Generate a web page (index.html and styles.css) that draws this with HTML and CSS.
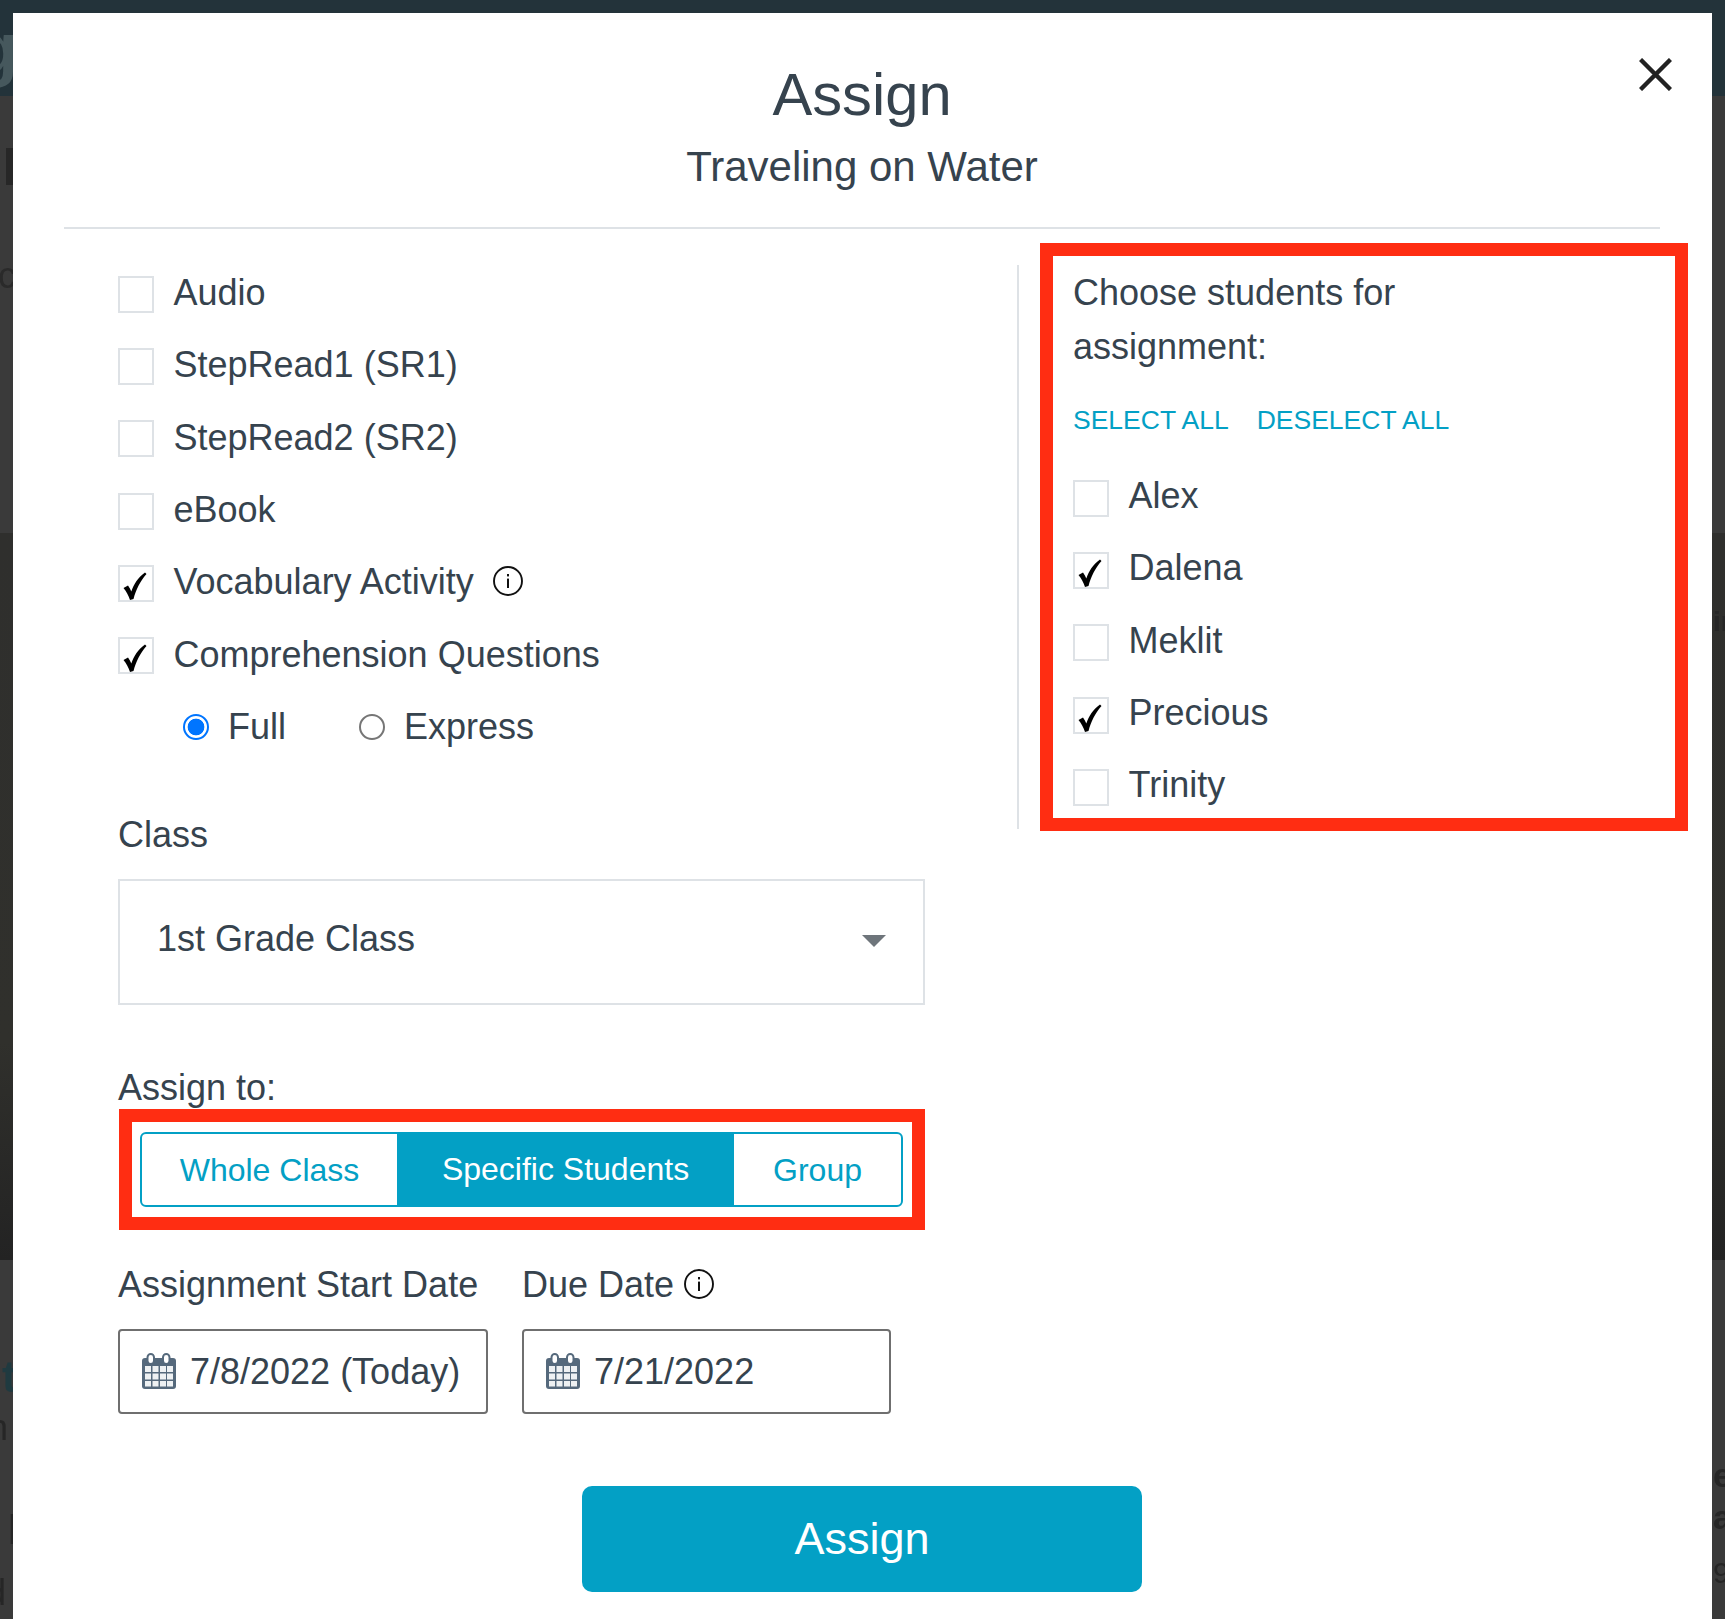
FILE: index.html
```html
<!DOCTYPE html>
<html lang="en">
<head>
<meta charset="utf-8">
<title>Assign</title>
<link rel="stylesheet" href="styles.css">
</head>
<body>
<div class="backdrop" aria-hidden="true">
  <div class="bd-top"></div>
  <div class="bd-band"></div>
  <div class="bd-bar"></div>
  <span class="frag frag-g">g</span>
  <span class="frag frag-c">c</span>
  <span class="frag frag-t">t</span>
  <span class="frag frag-n">n</span>
  <span class="frag frag-l">l</span>
  <span class="frag frag-d">d</span>
  <span class="frag frag-ir">ir</span>
  <span class="frag frag-e">e</span>
  <span class="frag frag-a">a</span>
  <span class="frag frag-9">9</span>
</div>
<svg class="defs" width="0" height="0" aria-hidden="true">
  <symbol id="check" viewBox="0 0 24 28">
    <path d="M0.500 16 L5 13.500 C6.500 15.500 7.500 17.500 8.300 19.500 C11 12 15 5.500 22 0.500 L23.500 2 C17 9.500 13 17.500 10.500 27 L7 28 C5.500 23.500 3.500 19.500 0.500 16 Z" fill="#000"/>
  </symbol>
  <symbol id="info" viewBox="0 0 30 30">
    <circle cx="15" cy="15" r="14" fill="none" stroke="#111" stroke-width="1.900"/>
    <rect x="14" y="8" width="2" height="2.400" fill="#111"/>
    <rect x="14" y="12.600" width="2" height="9.400" fill="#111"/>
  </symbol>
  <symbol id="cal" viewBox="0 0 34 36">
    <rect x="0" y="5" width="34" height="31" rx="3" fill="#55697c"/>
    <rect x="5.500" y="1" width="6.500" height="10" rx="3.250" fill="#fff" stroke="#55697c" stroke-width="2"/>
    <rect x="21" y="1" width="6.500" height="10" rx="3.250" fill="#fff" stroke="#55697c" stroke-width="2"/>
    <path d="M3 13h6v6H3zM10.500 13h6v6h-6zM18 13h6v6h-6zM25 13h6v6h-6zM3 20.500h6v6H3zM10.500 20.500h6v6h-6zM18 20.500h6v6h-6zM25 20.500h6v6h-6zM3 28h6v5.500H3zM10.500 28h6v5.500h-6zM18 28h6v5.500h-6zM25 28h6v5.500h-6z" fill="#eef1f3"/>
  </symbol>
</svg>
<main class="modal">
  <button class="close" type="button" aria-label="Close">
    <svg viewBox="0 0 33 33" width="33" height="33"><path d="M1.500 1.500L31.500 31.500M31.500 1.500L1.500 31.500" stroke="#222" stroke-width="4.400" fill="none"/></svg>
  </button>
  <header class="head">
    <h1 class="title">Assign</h1>
    <h2 class="subtitle">Traveling on Water</h2>
  </header>
  <div class="columns">
    <section class="left">
      <label class="check"><span class="box"></span>Audio</label>
      <label class="check"><span class="box"></span>StepRead1 (SR1)</label>
      <label class="check"><span class="box"></span>StepRead2 (SR2)</label>
      <label class="check"><span class="box"></span>eBook</label>
      <label class="check"><span class="box"><svg class="tick"><use href="#check"/></svg></span>Vocabulary Activity<svg class="info info-vocab"><use href="#info"/></svg></label>
      <label class="check"><span class="box"><svg class="tick"><use href="#check"/></svg></span>Comprehension Questions</label>
      <div class="radios">
        <label class="radio radio-full"><span class="dot dot-on"></span>Full</label>
        <label class="radio"><span class="dot"></span>Express</label>
      </div>
      <div class="field-label class-label">Class</div>
      <div class="select">1st Grade Class<span class="caret"></span></div>
      <div class="field-label assign-label">Assign to:</div>
      <div class="red-box seg-wrap">
        <div class="seg">
          <span class="seg-item seg-whole">Whole Class</span>
          <span class="seg-item seg-specific">Specific Students</span>
          <span class="seg-item seg-group">Group</span>
        </div>
      </div>
      <div class="dates">
        <div class="date-col">
          <div class="field-label date-label">Assignment Start Date</div>
          <div class="date-input"><svg class="cal"><use href="#cal"/></svg>7/8/2022 (Today)</div>
        </div>
        <div class="date-col">
          <div class="field-label date-label">Due Date<svg class="info info-due"><use href="#info"/></svg></div>
          <div class="date-input"><svg class="cal"><use href="#cal"/></svg>7/21/2022</div>
        </div>
      </div>
    </section>
    <div class="divider"></div>
    <section class="red-box students">
      <p class="students-title">Choose students for assignment:</p>
      <div class="links"><a class="link">SELECT ALL</a><a class="link">DESELECT ALL</a></div>
      <label class="check"><span class="box"></span>Alex</label>
      <label class="check"><span class="box"><svg class="tick"><use href="#check"/></svg></span>Dalena</label>
      <label class="check"><span class="box"></span>Meklit</label>
      <label class="check"><span class="box"><svg class="tick"><use href="#check"/></svg></span>Precious</label>
      <label class="check"><span class="box"></span>Trinity</label>
    </section>
  </div>
  <div class="actions"><button class="assign-btn" type="button">Assign</button></div>
</main>
</body>
</html>
```

FILE: styles.css
```css
* { box-sizing: border-box; }
html, body { margin: 0; height: 1619px; overflow: hidden; }
body {
  background: #3a3a3a;
  font-family: "Liberation Sans", Arial, sans-serif;
  color: #36434e;
  position: relative;
}
.defs { position: absolute; }

.backdrop { position: absolute; inset: 0; overflow: hidden; }
.bd-top { position: absolute; left: 0; right: 0; top: 0; height: 96px; background: #23333a; }
.bd-band {
  position: absolute;
  left: 0;
  right: 0;
  top: 533px;
  height: 727px;
  background: linear-gradient(#2f2f2d, #30302c 70%, #232323);
}
.bd-bar { position: absolute; left: 6px; top: 148px; width: 8px; height: 37px; background: #272727; }
.frag { position: absolute; color: #262626; font-weight: 700; filter: blur(.6px); line-height: 1; }
.frag-g { left: -26px; top: 12px; font-size: 72px; color: #46585d; }
.frag-c { left: -2px; top: 258px; font-size: 36px; font-weight: 400; color: #2a2a2a; }
.frag-t { left: 2px; top: 1355px; font-size: 44px; color: #1f3a40; }
.frag-n { left: -12px; top: 1410px; font-size: 36px; font-weight: 400; }
.frag-l { left: 8px; top: 1510px; font-size: 40px; font-weight: 400; }
.frag-d { left: -14px; top: 1575px; font-size: 36px; font-weight: 400; }
.frag-ir { left: 1713px; top: 608px; font-size: 28px; }
.frag-e { left: 1713px; top: 1458px; font-size: 34px; }
.frag-a { left: 1713px; top: 1500px; font-size: 34px; }
.frag-9 { left: 1713px; top: 1558px; font-size: 30px; font-weight: 400; }

.modal {
  position: absolute;
  left: 13px;
  top: 13px;
  width: 1699px;
  height: 1606px;
  background: #fff;
}
.close {
  position: absolute;
  left: 1626px;
  top: 45px;
  width: 33px;
  height: 33px;
  padding: 0;
  border: 0;
  background: none;
  line-height: 0;
}
.head {
  margin: 0 52px 0 51px;
  height: 216px;
  padding-top: 49px;
  border-bottom: 2px solid #dee2e6;
  text-align: center;
}
.title { margin: 0; font-size: 59.7px; line-height: 66px; font-weight: 400; }
.subtitle { margin: 15px 0 0; font-size: 42px; line-height: 48px; font-weight: 400; }

.columns { display: flex; align-items: flex-start; padding: 14px 0 0 105px; }
.left { width: 807px; padding-top: 14px; }
.divider { width: 2px; height: 564px; margin: 22px 0 0 92px; background: #dee2e6; }
.red-box { border: 13px solid #ff2d12; }

.check {
  display: flex;
  align-items: center;
  height: 72.3px;
  font-size: 36px;
  line-height: 44px;
  white-space: nowrap;
}
.box {
  flex: none;
  width: 36px;
  height: 37px;
  margin: 2px 19.5px 0 0;
  border: 2px solid #dee2e6;
  position: relative;
}
.students .box { margin-top: 4px; }
.tick { position: absolute; left: 3px; top: 5px; width: 24px; height: 28px; }
.info { width: 30px; height: 30px; flex: none; }
.info-vocab { margin-left: 19px; margin-top: -2px; }
.info-due { margin-left: 10px; margin-top: -2px; }

.radios { display: flex; align-items: center; height: 72px; padding-left: 65px; font-size: 36px; }
.radio { display: flex; align-items: center; }
.radio-full { margin-right: 73px; }
.dot {
  width: 26px;
  height: 26px;
  margin-right: 19px;
  border: 2px solid #767676;
  border-radius: 50%;
  background: #fff;
}
.dot-on {
  border-color: #0075ff;
  background: radial-gradient(circle, #0075ff 0 8px, #fff 8.700px);
}

.field-label { font-size: 36px; line-height: 44px; }
.class-label { margin-top: 50px; }
.select {
  display: flex;
  align-items: center;
  justify-content: space-between;
  height: 126px;
  margin-top: 22px;
  padding: 0 37px 6px 37px;
  border: 2px solid #dee2e6;
  font-size: 36px;
}
.caret {
  width: 0;
  height: 0;
  margin-top: 4px;
  border-left: 12px solid transparent;
  border-right: 12px solid transparent;
  border-top: 12px solid #6e757b;
}
.assign-label { margin-top: 61px; }
.seg-wrap { margin: -1px 0 0 1px; height: 121px; padding: 10px 9px 9px 8px; }
.seg {
  display: flex;
  height: 75px;
  padding-top: 2px;
  border: 2px solid #03a0c5;
  border-radius: 6px;
  font-size: 32px;
  color: #03a0c5;
  overflow: hidden;
}
.seg-item { display: flex; align-items: center; justify-content: center; }
.seg-whole { width: 255px; }
.seg-specific { width: 337px; background: #03a0c5; color: #fff; margin: -4px 0 -2px; }
.seg-group { flex: 1; }

.dates { display: flex; gap: 34px; margin-top: 33px; }
.date-col { width: 370px; }
.date-col + .date-col { width: 369px; }
.date-label { display: flex; align-items: center; height: 44px; white-space: nowrap; }
.date-input {
  display: flex;
  align-items: center;
  height: 85px;
  margin-top: 22px;
  padding: 2px 0 0 22px;
  border: 2px solid #6f6f6f;
  border-radius: 4px;
  font-size: 36px;
  white-space: nowrap;
}
.cal { width: 34px; height: 36px; margin: -2px 14px 0 0; flex: none; }

.students { width: 648px; height: 588px; margin-left: 21px; padding: 10px 20px 0; }
.students-title { margin: 0; max-width: 420px; font-size: 36px; line-height: 54px; }
.links { display: flex; gap: 28px; margin-top: 31px; height: 30px; align-items: center; }
.link { font-size: 26.5px; color: #03a0c5; }
.links + .check { margin-top: 25px; }

.actions { display: flex; justify-content: center; position: absolute; left: 0; right: 1px; top: 1473px; }
.assign-btn {
  width: 560px;
  height: 106px;
  border: 0;
  border-radius: 10px;
  background: #03a0c5;
  color: #fff;
  font: 45px "Liberation Sans", Arial, sans-serif;
}
```
